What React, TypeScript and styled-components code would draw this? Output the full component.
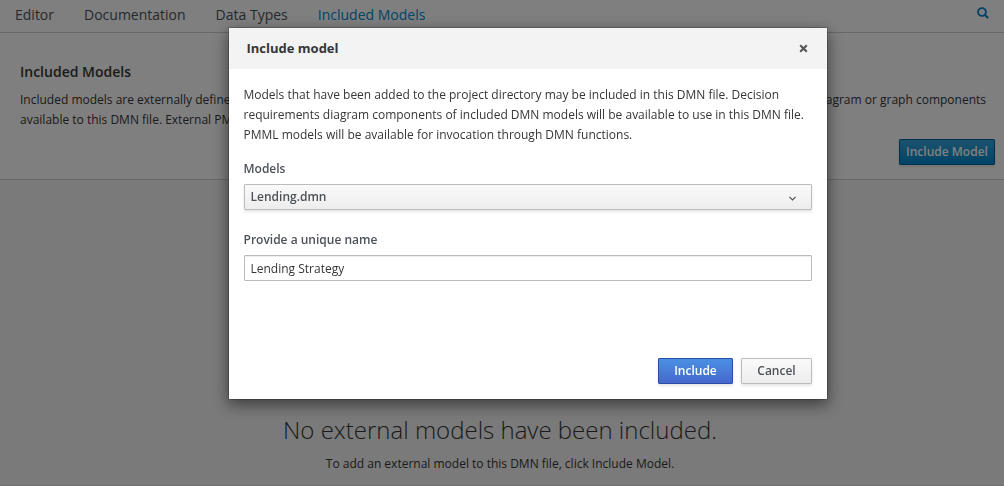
import React from "react";
import styled, { createGlobalStyle, css } from "styled-components";

const GlobalStyle = createGlobalStyle`
  *, *::before, *::after { box-sizing: border-box; }
  html, body { margin: 0; height: 100%; overflow: hidden; }
  body {
    background: #f5f5f5;
    color: #363636;
    font-family: "Open Sans", "Noto Sans", sans-serif;
    font-size: 12px;
    line-height: 20px;
  }
  button, input { font-family: inherit; }
`;

const Page = styled.div`
  display: flex;
  flex-direction: column;
  height: 486px;
  overflow: hidden;
`;

const TabBar = styled.nav`
  display: flex;
  align-items: center;
  gap: 30px;
  height: 33px;
  padding: 0 15px 3px;
  background: #fff;
  border-bottom: 1px solid #d1d1d1;
`;

const Tab = styled.a<{ $active?: boolean }>`
  font-size: 14px;
  line-height: 22px;
  color: ${(p) => (p.$active ? "#0088ce" : "#4d5258")};
`;

const SearchIcon = styled.svg`
  width: 12px;
  height: 12px;
  margin-left: auto;
  margin-top: -3px;
`;

const Intro = styled.section`
  display: flex;
  flex-direction: column;
  height: 147px;
  padding: 29px 9px 14px 20px;
  background: #fff;
  border-bottom: 1px solid #d1d1d1;
`;

const IntroTitle = styled.h3`
  margin: 0 0 8px;
  font-size: 14px;
  font-weight: 600;
  line-height: 20px;
`;

const IntroText = styled.div`
  white-space: nowrap;
`;

const IntroLine = styled.div`
  display: flex;
  justify-content: space-between;
  width: 966px;

  span:last-child {
    flex: 1 0 0;
    min-width: 0;
    display: flex;
    justify-content: flex-end;
  }
`;

const EmptyState = styled.section`
  flex: 1;
  display: flex;
  flex-direction: column;
  align-items: center;
  justify-content: flex-end;
  padding: 0 4px 11px 0;
  border-bottom: 1px solid #e4dede;
`;

const EmptyTitle = styled.h1`
  margin: 0 0 11px;
  font-size: 24px;
  font-weight: 300;
  line-height: 26px;
`;

const Backdrop = styled.div`
  position: fixed;
  inset: 0;
  background: rgba(0, 0, 0, 0.5);
`;

const Dialog = styled.div`
  position: absolute;
  left: 228px;
  top: 27px;
  width: 600px;
  height: 373px;
  display: flex;
  flex-direction: column;
  background: #fff;
  background-clip: padding-box;
  border: 1px solid rgba(0, 0, 0, 0.2);
  border-radius: 1px;
  box-shadow: 0 5px 15px rgba(0, 0, 0, 0.5);
`;

const DialogHeader = styled.header`
  display: flex;
  align-items: center;
  justify-content: space-between;
  height: 41px;
  padding: 0 19px 0 17.5px;
  background: #f3f3f3;
`;

const DialogTitle = styled.h4`
  margin: 0 0 2px;
  font-size: 13px;
  font-weight: 700;
  line-height: 20px;
`;

const CloseIcon = styled.svg`
  width: 9px;
  height: 9px;
`;

const DialogBody = styled.div`
  flex: 1;
  display: flex;
  flex-direction: column;
  padding: 16px 15px 0;
`;

const Description = styled.p`
  margin: 0 -5px 14px -0.5px;
  white-space: nowrap;
`;

const Label = styled.label`
  margin: 0 0 5px -0.5px;
  font-weight: 600;
  line-height: 20px;
  color: #4d5258;
`;

const raised = css`
  border-radius: 1px;
  border: 1px solid #bbb;
  background: linear-gradient(#fafafa, #ededed);
  color: #4d5258;
  font-size: 12px;
  font-weight: 600;
  line-height: 20px;
  box-shadow: 0 2px 3px rgba(3, 3, 3, 0.1);
`;

const Select = styled.button`
  ${raised}
  display: flex;
  align-items: center;
  justify-content: space-between;
  height: 26px;
  margin: 0 0 20px;
  padding: 0 15px 1px 5.5px;
`;

const Chevron = styled.svg`
  width: 7px;
  height: 5px;
  margin-top: 3px;
`;

const TextInput = styled.input`
  height: 26px;
  padding: 2px 5.5px;
  border: 1px solid #bbb;
  border-radius: 1px;
  background: #fff;
  color: #363636;
  font-size: 12px;
  line-height: 20px;
  box-shadow: inset 0 1px 1px rgba(3, 3, 3, 0.075);
`;

const DialogFooter = styled.footer`
  display: flex;
  justify-content: flex-end;
  gap: 8px;
  padding: 0 15px 15px;
`;

const Button = styled.button<{ $variant?: "primary" | "link"; $width: number }>`
  ${raised}
  width: ${(p) => p.$width}px;
  height: 26px;
  padding: 0 0 1px;
  text-align: center;
  white-space: nowrap;
  ${(p) =>
    p.$variant === "primary" &&
    css`
      color: #fff;
      border-color: #2b4da5;
      background: linear-gradient(#4a90e2, #4668cd);
    `}
  ${(p) =>
    p.$variant === "link" &&
    css`
      align-self: flex-end;
      margin-top: auto;
      color: #fff;
      border-color: #00659c;
      background: linear-gradient(#39a5dc, #0088ce);
    `}
`;

export default function App() {
  return (
    <>
      <GlobalStyle />
      <Page>
        <TabBar>
          <Tab>Editor</Tab>
          <Tab>Documentation</Tab>
          <Tab>Data Types</Tab>
          <Tab $active>Included Models</Tab>
          <SearchIcon viewBox="0 0 12 12" fill="none" stroke="#0088ce">
            <circle cx="5" cy="5" r="3.9" strokeWidth="1.9" />
            <path d="M7.9 7.9 L10.6 10.6" strokeWidth="2.1" strokeLinecap="round" />
          </SearchIcon>
        </TabBar>
        <Intro>
          <IntroTitle>Included Models</IntroTitle>
          <IntroText>
            <IntroLine>
              <span>Included models are externally defined models that have been added to this DMN file.</span>
              <span>Included DMN models have their decision requirements diagram or graph components</span>
            </IntroLine>
            available to this DMN file. External PMML models can be invoked through DMN functions.
          </IntroText>
          <Button $variant="link" $width={96}>
            Include Model
          </Button>
        </Intro>
        <EmptyState>
          <EmptyTitle>No external models have been included.</EmptyTitle>
          <span>To add an external model to this DMN file, click Include Model.</span>
        </EmptyState>
      </Page>
      <Backdrop>
        <Dialog role="dialog">
          <DialogHeader>
            <DialogTitle>Include model</DialogTitle>
            <CloseIcon viewBox="0 0 9 9" stroke="#555" strokeWidth="2.1">
              <path d="M1.2 1.2 L7.8 7.8 M7.8 1.2 L1.2 7.8" />
            </CloseIcon>
          </DialogHeader>
          <DialogBody>
            <Description>
              Models that have been added to the project directory may be included in this DMN file. Decision
              <br />
              requirements diagram components of included DMN models will be available to use in this DMN file.
              <br />
              PMML models will be available for invocation through DMN functions.
            </Description>
            <Label>Models</Label>
            <Select>
              Lending.dmn
              <Chevron viewBox="0 0 7 5" fill="none" stroke="#4d5258" strokeWidth="1.2">
                <path d="M0.4 0.8 L3.5 3.9 L6.6 0.8" />
              </Chevron>
            </Select>
            <Label htmlFor="model-name">Provide a unique name</Label>
            <TextInput id="model-name" defaultValue="Lending Strategy" />
          </DialogBody>
          <DialogFooter>
            <Button $variant="primary" $width={75}>
              Include
            </Button>
            <Button $width={71}>Cancel</Button>
          </DialogFooter>
        </Dialog>
      </Backdrop>
    </>
  );
}
